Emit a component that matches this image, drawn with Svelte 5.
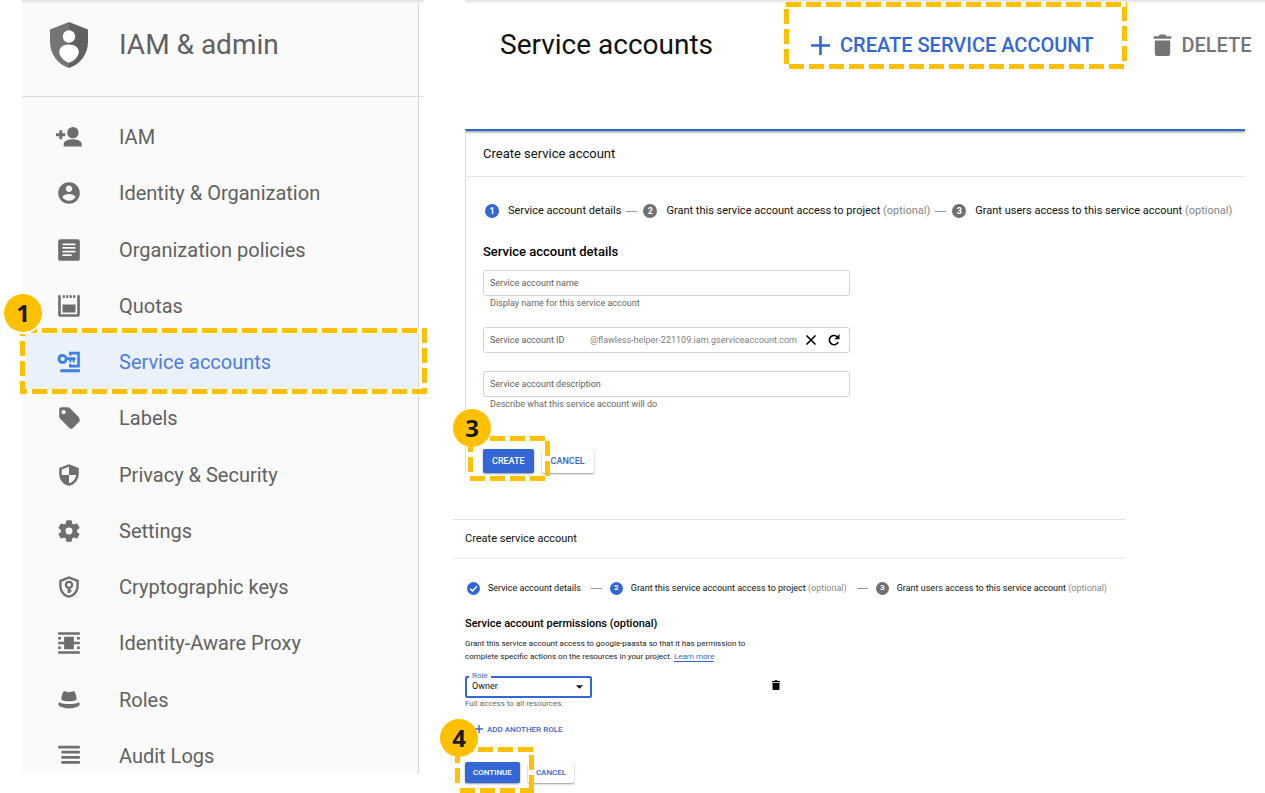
<script>
  const navItems = [
    { label: 'IAM', icon: 'person-add' },
    { label: 'Identity & Organization', icon: 'account' },
    { label: 'Organization policies', icon: 'article' },
    { label: 'Quotas', icon: 'quota' },
    { label: 'Service accounts', icon: 'service', active: true },
    { label: 'Labels', icon: 'tag' },
    { label: 'Privacy & Security', icon: 'shield' },
    { label: 'Settings', icon: 'gear' },
    { label: 'Cryptographic keys', icon: 'key-shield' },
    { label: 'Identity-Aware Proxy', icon: 'proxy' },
    { label: 'Roles', icon: 'hat' },
    { label: 'Audit Logs', icon: 'logs' }
  ];

  const detailSteps = [
    { mark: '1', text: 'Service account details', on: true },
    { mark: '2', text: 'Grant this service account access to project', optional: true },
    { mark: '3', text: 'Grant users access to this service account', optional: true }
  ];
  const accessSteps = [
    { mark: 'check', text: 'Service account details', on: true },
    { mark: '2', text: 'Grant this service account access to project', optional: true, on: true },
    { mark: '3', text: 'Grant users access to this service account', optional: true }
  ];

  let name = $state('');
  let id = $state('');
  let description = $state('');
  let role = $state('Owner');
</script>

{#snippet icon(kind)}
  <svg class="nav-icon" viewBox={kind === 'person-add' ? '1 1 22 22' : '0 0 24 24'} aria-hidden="true">
    {#if kind === 'person-add'}
      <circle cx="15.300" cy="8.300" r="4.800" />
      <path d="M15.200 14c-2.700 0-7.700 1.200-7.700 4v2h15.300v-2c0-2.800-4.900-4-7.600-4z" />
      <path d="M3.800 6.300h2.500v2.500h2.500v2.500H6.300v2.500H3.800v-2.500H1V8.800h2.800z" />
    {:else if kind === 'account'}
      <path d="M12 2C6.480 2 2 6.480 2 12s4.480 10 10 10 10-4.480 10-10S17.520 2 12 2zm0 3c1.660 0 3 1.340 3 3s-1.340 3-3 3-3-1.340-3-3 1.340-3 3-3zm0 14.200c-2.500 0-4.710-1.280-6-3.220.03-1.990 4-3.080 6-3.080 1.990 0 5.970 1.090 6 3.080-1.290 1.940-3.500 3.220-6 3.220z" />
    {:else if kind === 'article'}
      <path fill-rule="evenodd" d="M4 2h16a2 2 0 0 1 2 2v16a2 2 0 0 1-2 2H4a2 2 0 0 1-2-2V4a2 2 0 0 1 2-2zM6 6v1.600h12V6zM6 9.300v1.600h12V9.300zM6 12.600v1.600h12v-1.600zM6 15.900v1.600h8.500v-1.600z" />
    {:else if kind === 'quota'}
      <path d="M2 2h2.400v17.600h15.200V2H22v18a2 2 0 0 1-2 2H4a2 2 0 0 1-2-2zM6 10.500h12v7.500H6zM6.200 2h2v2.600h-2zM9.400 2h2v2.600h-2zM12.600 2h2v2.600h-2zM15.800 2h2v2.600h-2z" />
    {:else if kind === 'service'}
      <path fill-rule="evenodd" d="M6.100 4.600c2 0 3.600 1.200 4.200 2.900H18v2.800h-.9v2.200h-1.700v-2.200h-1.300v2.200h-1.700v-2.200h-2.100a4.500 4.500 0 1 1-4.200-5.700zm0 2.500a2 2 0 1 0 0 4 2 2 0 0 0 0-4z" />
      <path d="M12 2.500h10v14.500H12v-3.200h2.300v.8h5.300V5h-5.300v1H12zM4 18.800h18v2.700H4z" />
    {:else if kind === 'tag'}
      <path d="M21.410 11.580l-9-9C12.050 2.220 11.550 2 11 2H5C3.900 2 3 2.900 3 4v7c0 .55.22 1.050.59 1.420l9 9c.36.360.86.580 1.410.580.55 0 1.050-.22 1.410-.59l6-6c.37-.36.59-.86.59-1.410 0-.55-.23-1.060-.59-1.420zM7 8.500C5.900 8.500 5 7.600 5 6.500S5.900 4.500 7 4.500s2 .9 2 2-.9 2-2 2z" />
    {:else if kind === 'shield'}
      <path fill-rule="evenodd" d="M12 2L3 5.500V11c0 5.300 3.840 10 9 11 5.160-1 9-5.700 9-11V5.500zM12 12h6.600c-.5 3.700-3.100 6.800-6.600 7.700zM12 12H5.300V7L12 4.400z" />
    {:else if kind === 'gear'}
      <path d="M19.430 12.980c.04-.32.070-.64.070-.98s-.03-.66-.07-.98l2.110-1.650c.19-.15.240-.42.120-.64l-2-3.460c-.12-.22-.39-.3-.61-.22l-2.490 1c-.52-.4-1.080-.73-1.690-.98l-.38-2.650C14.460 2.180 14.250 2 14 2h-4c-.25 0-.46.180-.49.420l-.38 2.650c-.61.250-1.170.590-1.690.98l-2.490-1c-.23-.09-.49 0-.61.220l-2 3.460c-.13.220-.07.490.12.640l2.110 1.650c-.04.320-.07.650-.07.980s.03.660.07.980l-2.110 1.650c-.19.150-.24.420-.12.640l2 3.460c.12.220.39.300.61.220l2.490-1c.52.400 1.080.730 1.690.98l.38 2.650c.03.240.24.420.49.420h4c.25 0 .46-.18.49-.42l.38-2.650c.61-.25 1.170-.59 1.690-.98l2.490 1c.23.090.49 0 .61-.22l2-3.460c.12-.22.070-.49-.12-.64zM12 15.200a3.200 3.200 0 1 1 0-6.400 3.200 3.200 0 0 1 0 6.400z" />
    {:else if kind === 'key-shield'}
      <path fill-rule="evenodd" d="M12 2L3 5.500V11c0 5.300 3.840 10 9 11 5.160-1 9-5.700 9-11V5.500zM12 4.400l6.800 2.700V11c0 4-2.800 7.800-6.800 8.700-4-.9-6.800-4.700-6.800-8.700V7.100z" />
      <path fill-rule="evenodd" d="M12 6.200a3.800 3.800 0 0 0-1.300 7.400V17.500h2.600v-1.300h1.200v-1.500h-1.200v-1.100A3.800 3.800 0 0 0 12 6.200zm0 2a1.800 1.800 0 1 1 0 3.600 1.800 1.800 0 0 1 0-3.600z" />
    {:else if kind === 'proxy'}
      <path d="M2 2h20v2.400H2zM2 19.600h20V22H2zM7.500 6.200h9v4.700H22v2.200h-5.500v4.700h-9v-4.700H2v-2.200h5.500zM2 6.400h2.600v2.400H2zM19.400 6.400H22v2.400h-2.600zM2 15.200h2.600v2.400H2zM19.400 15.200H22v2.400h-2.600z" />
    {:else if kind === 'hat'}
      <path d="M8 4c1.400 0 2.400.9 4 .9S14.600 4 16 4c1.500 0 2.300 2 3 6.500v1.300c-2 1-4.500 1.400-7 1.400s-5-.4-7-1.400v-1.300C5.700 6 6.500 4 8 4z" />
      <path d="M3 14.200c2.500 1 5.700 1.500 9 1.500s6.500-.5 9-1.500c.7.300 1 .9 1 1.600 0 2.200-4.800 4-10 4s-10-1.800-10-4c0-.7.300-1.300 1-1.600z" />
    {:else if kind === 'logs'}
      <path d="M2 2.500h20v2.600H2zM5 7.200h17v2.600H5zM5 11.900h17v2.600H5zM5 16.600h17v2.600H5z" />
    {/if}
  </svg>
{/snippet}

{#snippet trash(cls)}
  <svg class={cls} viewBox="4 2 16 20" aria-hidden="true">
    <path d="M5 8h14v12a2 2 0 0 1-2 2H7a2 2 0 0 1-2-2zM4 4h4.500l1-1.500h5l1 1.500H20v2.300H4z" />
  </svg>
{/snippet}

{#snippet stepper(steps)}
  <ol class="steps">
    {#each steps as step}
      <li>
        <span class="dot" class:on={step.on}>
          {#if step.mark === 'check'}
            <svg viewBox="0 0 12 12" aria-label="Done"><path d="M2.500 6.200l2.400 2.400 4.800-5" /></svg>
          {:else}{step.mark}{/if}
        </span>
        <span>{step.text}{#if step.optional}{' '}<em>(optional)</em>{/if}</span>
      </li>
    {/each}
  </ol>
{/snippet}

<div class="page">
  <aside>
    <header class="brand">
      <svg viewBox="0 0 38 46" aria-hidden="true">
        <path fill="#757575" d="M19 0L0 7.500V20c0 12 8 22.500 19 26z" />
        <path fill="#616161" d="M19 0l19 7.500V20c0 12-8 22.500-19 26z" />
        <circle cx="19" cy="14.500" r="6.200" fill="#fff" />
        <path fill="#fff" d="M9.300 29.500c0-4.200 4.200-7 9.700-7s9.700 2.800 9.700 7c0 5.500-4.700 9.500-9.700 11.300-5-1.800-9.700-5.800-9.700-11.300z" />
      </svg>
      <h2>IAM &amp; admin</h2>
    </header>
    <nav aria-label="IAM and admin">
      {#each navItems as item}
        <a href="#top" class:active={item.active} aria-current={item.active ? 'page' : undefined}>
          {@render icon(item.icon)}
          <span>{item.label}</span>
          {#if item.active}
            <i class="marquee marquee-nav"></i>
            <b class="badge badge-nav">1</b>
          {/if}
        </a>
      {/each}
    </nav>
  </aside>

  <main>
    <header class="toolbar">
      <h1>Service accounts</h1>
      <button class="tool create-tool">
        <svg viewBox="0 0 19 19" aria-hidden="true"><path d="M8.200 0h2.600v8.200H19v2.600h-8.200V19H8.200v-8.200H0V8.200h8.200z" /></svg>
        CREATE SERVICE ACCOUNT
        <i class="marquee marquee-create"></i>
      </button>
      <button class="tool delete-tool">
        {@render trash('')}
        DELETE
      </button>
    </header>

    <section class="panel details">
      <h3 class="panel-title">Create service account</h3>
      <form class="panel-body" onsubmit={(e) => e.preventDefault()}>
        {@render stepper(detailSteps)}
        <h4>Service account details</h4>
        <div class="group">
          <div class="field">
            <label for="sa-name">Service account name</label>
            <input id="sa-name" bind:value={name} />
          </div>
          <p class="hint">Display name for this service account</p>
        </div>
        <div class="group">
          <div class="field">
            <label for="sa-id">Service account ID</label>
            <input id="sa-id" bind:value={id} />
            <span class="suffix">@flawless-helper-221109.iam.gserviceaccount.com</span>
            <button class="glyph" type="button" aria-label="Clear">
              <svg viewBox="0 0 12 12"><path class="line" d="M1.500 1.500l9 9M10.500 1.500l-9 9" /></svg>
            </button>
            <button class="glyph" type="button" aria-label="Refresh">
              <svg viewBox="0 0 12 12"><path class="line" d="M10.200 8a4.600 4.600 0 1 1-1-5.200" /><path d="M11.500 0v5.200H6.300z" /></svg>
            </button>
          </div>
        </div>
        <div class="group">
          <div class="field">
            <label for="sa-desc">Service account description</label>
            <input id="sa-desc" bind:value={description} />
          </div>
          <p class="hint">Describe what this service account will do</p>
        </div>
        <div class="actions">
          <button class="btn primary">CREATE</button>
          <button class="btn" type="button">CANCEL</button>
          <i class="marquee marquee-action"></i>
          <b class="badge badge-action">3</b>
        </div>
      </form>
    </section>

    <section class="panel access">
      <h3 class="panel-title">Create service account</h3>
      <form class="panel-body" onsubmit={(e) => e.preventDefault()}>
        {@render stepper(accessSteps)}
        <h4>Service account permissions (optional)</h4>
        <p class="intro">
          Grant this service account access to google-paasta so that it has permission to complete
          specific actions on the resources in your project. <a href="#top">Learn more</a>
        </p>
        <div class="role-row">
          <div class="role">
            <label for="sa-role">Role</label>
            <select id="sa-role" bind:value={role}>
              <option>Owner</option>
              <option>Editor</option>
              <option>Viewer</option>
            </select>
            <svg viewBox="0 0 8 4" aria-hidden="true"><path d="M0 0h8L4 4z" /></svg>
          </div>
          <button class="glyph" type="button" aria-label="Remove role">{@render trash('bin')}</button>
        </div>
        <p class="hint">Full access to all resources.</p>
        <button class="add" type="button">
          <svg viewBox="0 0 8 8" aria-hidden="true"><path d="M3.300 0h1.400v3.300H8v1.400H4.700V8H3.300V4.700H0V3.300h3.300z" /></svg>
          ADD ANOTHER ROLE
        </button>
        <div class="actions">
          <button class="btn primary">CONTINUE</button>
          <button class="btn" type="button">CANCEL</button>
          <i class="marquee marquee-action"></i>
          <b class="badge badge-action">4</b>
        </div>
      </form>
    </section>
  </main>
</div>

<style>
  :global(body) {
    margin: 0;
    background: #fff;
  }

  .page {
    --blue: #3367d6;
    --amber: #ffc000;
    display: flex;
    min-height: 100vh;
    font-family: Roboto, sans-serif;
    color: #111;
  }

  .page * {
    box-sizing: border-box;
  }

  h1,
  h2,
  h3,
  h4,
  p,
  ol {
    margin: 0;
    padding: 0;
    font-weight: 400;
  }

  button,
  input,
  select {
    margin: 0;
    padding: 0;
    border: 0;
    background: none;
    font: inherit;
    color: inherit;
  }

  button {
    cursor: pointer;
    white-space: nowrap;
  }

  svg {
    display: block;
    flex: none;
    fill: currentColor;
  }

  /* Sidebar */
  aside {
    display: flex;
    flex: none;
    flex-direction: column;
    width: 397px;
    margin: 0 0 19px 22px;
    border-right: 1px solid #d8d8d8;
    background: #fafafa;
  }

  .brand {
    display: flex;
    align-items: center;
    gap: 31px;
    height: 97px;
    margin-right: -6px;
    padding: 0 0 7px 28px;
    border-bottom: 1px solid #dcdcdc;
    background: linear-gradient(#e0e0e0, transparent 4px);
    color: #616161;
  }

  .brand svg {
    width: 38px;
    height: 46px;
  }

  .brand h2 {
    font-size: 28px;
    line-height: 32px;
  }

  nav {
    display: grid;
    flex: 1;
    grid-auto-rows: 1fr;
    padding-top: 12px;
    margin-bottom: -10px;
  }

  nav a {
    position: relative;
    display: flex;
    align-items: center;
    gap: 37px;
    min-height: 56px;
    padding-left: 34px;
    font-size: 20px;
    line-height: 24px;
    color: #616161;
    text-decoration: none;
  }

  nav a.active {
    background: #eaf1fb;
    color: #4a7de2;
  }

  .nav-icon {
    width: 26px;
    height: 26px;
    color: #6e6e6e;
  }

  .active .nav-icon {
    color: #3f7ee8;
  }

  /* Callouts */
  .marquee {
    --top: 2px;
    --right: 0px;
    --bottom: 0px;
    --left: 0px;
    position: absolute;
    pointer-events: none;
    background:
      linear-gradient(90deg, var(--amber) 15px, #fff 15px) var(--top) 0 / 20px 5px repeat-x,
      linear-gradient(90deg, var(--amber) 15px, #fff 15px) var(--bottom) 100% / 20px 5px repeat-x,
      linear-gradient(var(--amber) 15px, #fff 15px) 100% var(--right) / 5px 20px repeat-y,
      linear-gradient(var(--amber) 15px, #fff 15px) 0 var(--left) / 5px 20px repeat-y;
  }

  .marquee-nav {
    --bottom: 12px;
    --left: 13px;
    inset: -6px -9px -4px -2px;
  }

  .marquee-create {
    --right: 4px;
    --bottom: 5px;
    --left: 7px;
    inset: -19px -34px 0 -27px;
  }

  .badge {
    position: absolute;
    width: 38px;
    height: 38px;
    border-radius: 50%;
    background: var(--amber);
    font: 700 24px/38px 'Open Sans', sans-serif;
    text-align: center;
    color: #1a1a1a;
    pointer-events: none;
  }

  .badge-nav {
    top: -40px;
    left: -18px;
    box-shadow: 0 0 0 2px #fff;
  }

  /* Main column */
  main {
    flex: 1;
    min-width: 0;
    padding-left: 34px;
  }

  .toolbar {
    display: flex;
    align-items: center;
    height: 90px;
    margin: 0 0 39px 12px;
    padding-left: 35px;
    background: linear-gradient(#e0e0e0, transparent 4px);
  }

  .toolbar h1 {
    font-size: 28px;
    line-height: 32px;
    white-space: nowrap;
    color: #111;
  }

  .tool {
    position: relative;
    display: flex;
    align-items: center;
    height: 48px;
    font-size: 20px;
    font-weight: 500;
  }

  .create-tool {
    gap: 10px;
    margin-left: 98px;
    color: var(--blue);
  }

  .create-tool svg {
    width: 19px;
    height: 19px;
  }

  .delete-tool {
    gap: 9px;
    margin-left: 60px;
    color: #757575;
  }

  .delete-tool svg {
    width: 19px;
    height: 22px;
  }

  .panel-title {
    display: flex;
    align-items: center;
  }

  .steps {
    display: flex;
    list-style: none;
    white-space: nowrap;
    line-height: 16px;
  }

  .steps li {
    display: flex;
    align-items: center;
  }

  .steps li + li::before {
    content: '';
    width: 11px;
    height: 1px;
    margin: 0 6px 0 5px;
    background: #999;
  }

  .steps em {
    font-style: normal;
    color: #868686;
  }

  .dot {
    display: grid;
    place-items: center;
    border-radius: 50%;
    background: #707070;
    font-weight: 700;
    line-height: 12px;
    color: #fff;
  }

  .dot.on {
    background: var(--blue);
  }

  .dot svg {
    width: 11px;
    height: 11px;
    fill: none;
    stroke: currentColor;
    stroke-width: 1.6;
  }

  h4 {
    font-weight: 500;
    line-height: 16px;
    color: #000;
  }

  .hint {
    font-size: 9px;
    line-height: 12px;
    color: #686868;
  }

  .btn {
    border-radius: 2px;
    background: #fff;
    box-shadow: 0 1px 2px rgba(0, 0, 0, 0.4);
    font-size: 9px;
    font-weight: 500;
    color: var(--blue);
  }

  .btn.primary {
    background: var(--blue);
    color: #fff;
  }

  .actions {
    position: relative;
    display: flex;
  }

  .glyph {
    color: #000;
  }

  /* First form */
  .details {
    margin: 0 20px 45px 12px;
    border-top: 2px solid #2f6bce;
    border-left: 1px solid #dedede;
    background: linear-gradient(#a8a8a8, transparent 3px);
  }

  .details .panel-title {
    height: 46px;
    padding: 0 0 1px 17px;
    border-bottom: 1px solid #e6e6e6;
    font-size: 13px;
  }

  .details .panel-body {
    padding: 26px 0 1px 17px;
  }

  .details .steps {
    padding-left: 2px;
    font-size: 11px;
  }

  .details .dot {
    width: 14px;
    height: 14px;
    margin-right: 9px;
    font-size: 9px;
  }

  .details h4 {
    margin: 25px 0 10px;
    font-size: 13px;
  }

  .group {
    max-width: 367px;
    margin-bottom: 18px;
  }

  .group .hint {
    padding: 1px 0 0 7px;
  }

  .field {
    display: flex;
    align-items: center;
    height: 26px;
    padding: 0 9px 0 6px;
    border: 1px solid #d4d4d4;
    border-radius: 3px;
    background: #fff;
    font-size: 9px;
    white-space: nowrap;
    color: #606060;
  }

  .field input {
    flex: 1;
    width: 0;
    min-width: 0;
    outline: 0;
  }

  .suffix {
    color: #808080;
  }

  .field .glyph {
    margin-left: 8px;
  }

  .field .glyph + .glyph {
    margin-left: 11px;
  }

  .field .glyph svg {
    width: 12px;
    height: 12px;
  }

  .line {
    fill: none;
    stroke: currentColor;
    stroke-width: 1.6;
  }

  .details .actions {
    gap: 8px;
    padding-top: 21px;
  }

  .details .btn {
    height: 24px;
    padding: 0 9px;
  }

  .details .marquee-action {
    --right: 5px;
    --bottom: 2px;
    --left: 1px;
    top: 8px;
    left: -15px;
    width: 82px;
    height: 45px;
  }

  .details .badge-action {
    top: -19px;
    left: -30px;
  }

  /* Second form */
  .access {
    margin-right: 139px;
    border-top: 1px solid #e2e2e2;
  }

  .access .panel-title {
    height: 39px;
    padding: 0 0 1px 12px;
    border-bottom: 2px solid #f2f2f2;
    font-size: 11px;
  }

  .access .panel-body {
    padding: 21px 0 10px 12px;
  }

  .access .steps {
    padding-left: 2px;
    font-size: 9px;
  }

  .access .steps :global(li + li)::before {
    margin: 0 8px 0 10px;
  }

  .access .dot {
    width: 13px;
    height: 13px;
    margin-right: 8px;
    font-size: 8px;
  }

  .access h4 {
    margin: 20px 0 5px;
    font-size: 11px;
  }

  .intro {
    max-width: 300px;
    font-size: 8px;
    line-height: 13px;
    color: #222;
  }

  .intro a {
    border-bottom: 1px solid;
    color: var(--blue);
    text-decoration: none;
  }

  .role-row {
    display: flex;
    align-items: center;
    gap: 180px;
    margin-top: 13px;
  }

  .role {
    position: relative;
    width: 127px;
    height: 22px;
    border: 2px solid var(--blue);
    border-radius: 2px;
  }

  .role label {
    position: absolute;
    top: -8px;
    left: 2px;
    padding: 0 3px;
    background: #fff;
    font-size: 8px;
    line-height: 12px;
    color: var(--blue);
  }

  .role select {
    display: block;
    width: 100%;
    height: 18px;
    padding: 0 0 2px 5px;
    appearance: none;
    outline: 0;
    font-size: 9px;
    line-height: 16px;
  }

  .role svg {
    position: absolute;
    top: 7px;
    right: 7px;
    width: 7px;
    height: 4px;
    pointer-events: none;
  }

  .role-row .glyph {
    padding-bottom: 4px;
  }

  .role-row :global(.bin) {
    width: 8px;
    height: 10px;
  }

  .access .hint {
    font-size: 8px;
  }

  .add {
    display: flex;
    align-items: center;
    gap: 4px;
    height: 16px;
    margin: 11px 0 25px 10px;
    font-size: 8px;
    font-weight: 500;
    color: var(--blue);
  }

  .add svg {
    width: 8px;
    height: 8px;
  }

  .access .actions {
    gap: 8px;
  }

  .access .btn {
    height: 21px;
    padding: 0 8px;
    font-size: 8px;
  }

  .access .marquee-action {
    --top: 3px;
    --right: 8px;
    --bottom: 5px;
    --left: 1px;
    top: -15px;
    left: -10px;
    width: 79px;
    height: 46px;
  }

  .access .badge-action {
    top: -43px;
    left: -25px;
  }
</style>
